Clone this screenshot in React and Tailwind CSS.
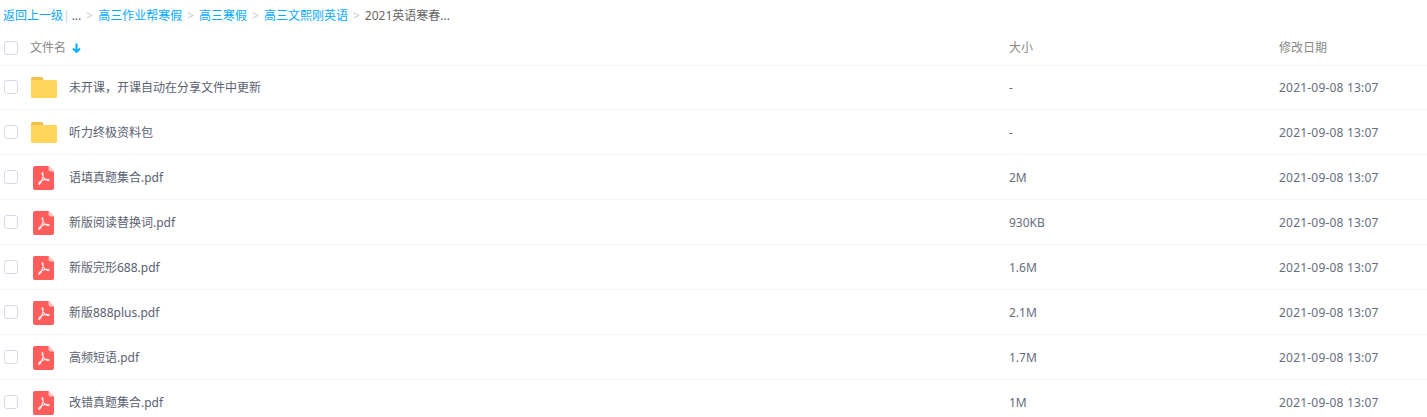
const files = [
  { name: '未开课，开课自动在分享文件中更新', size: '-', folder: true },
  { name: '听力终极资料包', size: '-', folder: true },
  { name: '语填真题集合.pdf', size: '2M' },
  { name: '新版阅读替换词.pdf', size: '930KB' },
  { name: '新版完形688.pdf', size: '1.6M' },
  { name: '新版888plus.pdf', size: '2.1M' },
  { name: '高频短语.pdf', size: '1.7M' },
  { name: '改错真题集合.pdf', size: '1M' },
];

const crumbs = ['高三作业帮寒假', '高三寒假', '高三文熙刚英语'];

function FolderIcon() {
  return (
    <svg width="26" height="21" viewBox="0 0 26 21">
      <path d="M0 2a2 2 0 0 1 2-2h8a2 2 0 0 1 2 1.2L12.5 4H0z" fill="#f0bf4c" />
      <rect x="0" y="3" width="26" height="18" rx="1.5" fill="#ffd659" />
    </svg>
  );
}

function PdfIcon() {
  return (
    <svg className="ml-[2px] mt-[2px]" width="21" height="24" viewBox="0 0 21 24">
      <path d="M2 0h13.5L21 5.5V22a2 2 0 0 1-2 2H2a2 2 0 0 1-2-2V2a2 2 0 0 1 2-2z" fill="#ff5c5c" />
      <path d="M15.5 0L21 5.5h-3.5a2 2 0 0 1-2-2z" fill="#ffc4c4" />
      <path
        d="M9.6 6.5c-.9 0-.6 2.6 1.2 5.2 1.2 1.8 2.8 2.8 4.2 3 1.2.1 1.5-.8.5-1.1-1.8-.5-5 .2-7 1.1-1.6.8-3.3 3.2-2.6 3.6.8.4 2-1.6 2.7-3.3.9-2.1 1.7-5.4 1.4-7-.1-1-.2-1.5-.4-1.5z"
        fill="none"
        stroke="#ffe9e9"
        strokeWidth="1.1"
      />
    </svg>
  );
}

function Checkbox() {
  return <div className="h-[14px] w-[14px] shrink-0 rounded-[3px] border border-[#d5dbe6] bg-white" />;
}

function Row({ file, first }) {
  const pad = first ? '' : 'pt-[2px]';
  return (
    <div className={`flex items-center border-b border-[#f1f4f8] text-[12px] text-[#666e7e] ${first ? 'h-[44px]' : 'h-[45px]'}`}>
      <div className={`ml-[4px] w-[27px] ${first ? 'mb-[1px]' : ''}`}><Checkbox /></div>
      <div className="flex w-[38px] justify-start">
        {file.folder ? <FolderIcon /> : <PdfIcon />}
      </div>
      <div className={`w-[940px] text-[#5a6171] ${pad}`}>{file.name}</div>
      <div className={`w-[270px] ${pad}`}>{file.size}</div>
      <div className={`tracking-[0.2px] ${pad}`}>2021-09-08 13:07</div>
    </div>
  );
}

export default function App() {
  return (
    <div className="h-[417px] overflow-hidden bg-white font-['Noto_Sans','Noto_Sans_CJK_SC',sans-serif]">
      <div className="flex h-[32px] items-center pl-[3px] text-[12px] text-[#09aaff]">
        <span>返回上一级</span>
        <span className="text-[#c4d8f4]">|</span>
        <span className="ml-[2px] text-[#666666]">...</span>
        {crumbs.map((c) => (
          <span key={c} className="flex items-center">
            <span className="mx-[5px] text-[#c4cbd8]">&gt;</span>
            <span>{c}</span>
          </span>
        ))}
        <span className="mx-[5px] text-[#c4cbd8]">&gt;</span>
        <span className="text-[#666666]">2021英语寒春...</span>
      </div>
      <div className="flex h-[34px] items-center border-b border-[#f1f4f8] text-[12px] text-[#888888]">
        <div className="mb-[1px] ml-[4px] w-[26px]"><Checkbox /></div>
        <div className="mb-[2px] flex w-[979px] items-center">
          <span>文件名</span>
          <svg className="ml-[6px]" width="9" height="10" viewBox="0 0 9 10">
            <path d="M4.5 0.5v8M1 5.5l3.5 3.5L8 5.5" fill="none" stroke="#09aaff" strokeWidth="2" />
          </svg>
        </div>
        <div className="mb-[2px] w-[270px]">大小</div>
        <div className="mb-[2px]">修改日期</div>
      </div>
      {files.map((f, i) => (
        <Row key={f.name} file={f} first={i === 0} />
      ))}
    </div>
  );
}
